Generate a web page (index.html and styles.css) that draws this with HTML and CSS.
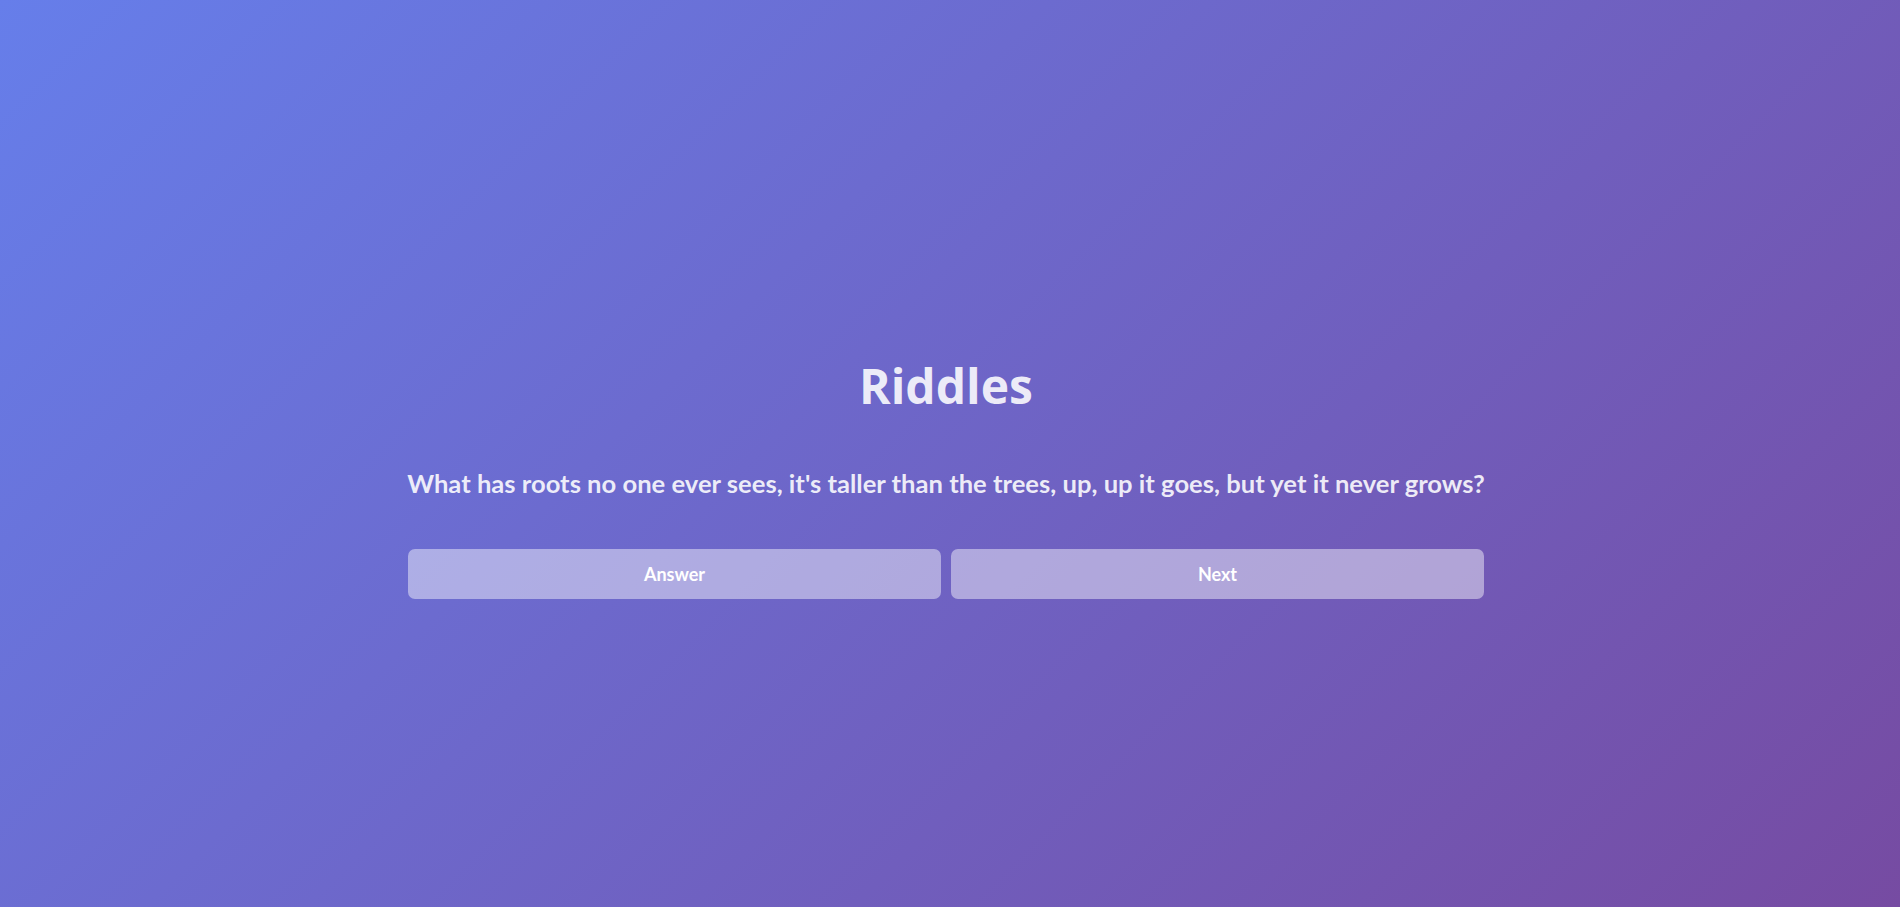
FILE: index.html
```html
<!DOCTYPE html>
<html lang="en">
<head>
<meta charset="utf-8">
<title>Riddles</title>
<link rel="stylesheet" href="styles.css">
</head>
<body>
<main class="page">
  <section class="card">
    <h1 class="title">Riddles</h1>
    <p class="question">What has roots no one ever sees, it's taller than the trees, up, up it goes, but yet it never grows?</p>
    <div class="actions">
      <button class="btn">Answer</button>
      <button class="btn">Next</button>
    </div>
  </section>
</main>
</body>
</html>
```

FILE: styles.css
```css
html, body {
  margin: 0;
  padding: 0;
  height: 100%;
}

body {
  background: linear-gradient(135deg, #667eea 0%, #764ba2 100%);
  font-family: Lato, "Open Sans", sans-serif;
  color: rgba(255, 255, 255, 0.88);
}

.page {
  min-height: 100vh;
  box-sizing: border-box;
  padding: 357px 8px 0 0;
  display: flex;
  justify-content: center;
}

.card {
  width: 1076px;
  display: flex;
  flex-direction: column;
  align-items: center;
}

.title {
  margin: 0;
  font-family: "Open Sans", Lato, sans-serif;
  font-size: 48px;
  line-height: 1.2;
  font-weight: 700;
}

.question {
  margin: 53px 0 0;
  font-size: 25.6px;
  line-height: 1.2;
  font-weight: 700;
  text-align: center;
  white-space: nowrap;
}

.actions {
  margin-top: 51px;
  width: 100%;
  display: flex;
  gap: 10px;
}

.btn {
  flex: 1;
  height: 50px;
  border: none;
  border-radius: 7px;
  background: rgba(255, 255, 255, 0.45);
  color: #fff;
  font-family: inherit;
  font-size: 18px;
  font-weight: 700;
  cursor: pointer;
}
```
